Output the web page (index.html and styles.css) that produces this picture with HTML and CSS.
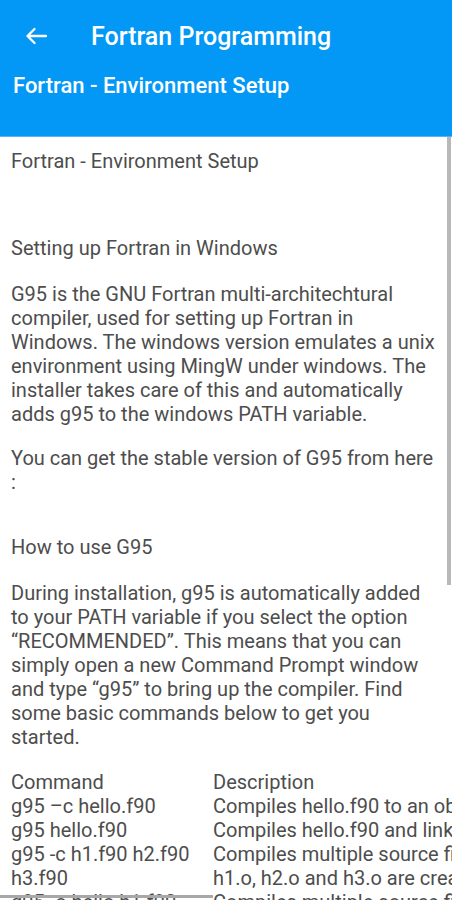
FILE: index.html
```html
<!DOCTYPE html>
<html lang="en">
<head>
  <meta charset="UTF-8">
  <meta name="viewport" content="width=device-width, initial-scale=1.0">
  <title>Fortran Programming</title>
  <link rel="stylesheet" href="styles.css">
</head>
<body>
  <header class="app-bar">
    <div class="toolbar">
      <button class="back" aria-label="Back">
        <svg width="22" height="18" viewBox="0 0 22 18">
          <path d="M21 9H2.5M9.5 2L2.5 9L9.5 16" fill="none" stroke="#fff" stroke-width="2.3" stroke-linecap="round" stroke-linejoin="round"/>
        </svg>
      </button>
      <h1 class="app-title">Fortran Programming</h1>
    </div>
    <div class="subtitle">Fortran - Environment Setup</div>
  </header>

  <main class="content">
    <div class="page-title">Fortran - Environment Setup</div>

    <h2>Setting up Fortran in Windows</h2>
    <p>G95 is the GNU Fortran multi-architechtural compiler, used for setting up Fortran in Windows. The windows version emulates a unix environment using MingW under windows. The installer takes care of this and automatically adds g95 to the windows PATH variable.</p>
    <p>You can get the stable version of G95 from here :</p>

    <h2>How to use G95</h2>
    <p>During installation, g95 is automatically added to your PATH variable if you select the option “RECOMMENDED”. This means that you can simply open a new Command Prompt window and type “g95” to bring up the compiler. Find some basic commands below to get you started.</p>

    <table class="commands">
      <colgroup><col class="cmd-col"><col class="desc-col"></colgroup>
      <tr><td>Command</td><td>Description</td></tr>
      <tr><td>g95 –c hello.f90</td><td>Compiles hello.f90 to an object file named hello.o</td></tr>
      <tr><td>g95 hello.f90</td><td>Compiles hello.f90 and links it to produce an executable a.exe</td></tr>
      <tr><td>g95 -c h1.f90 h2.f90 h3.f90</td><td>Compiles multiple source files. If all goes well, object files<br>h1.o, h2.o and h3.o are created</td></tr>
      <tr><td>g95 -o hello h1.f90 h2.f90 h3.f90</td><td>Compiles multiple source files and links them together to an executable file named 'hello'</td></tr>
    </table>
  </main>

  <div class="scroll-v"></div>
  <div class="scroll-h"></div>
</body>
</html>
```

FILE: styles.css
```css
html, body {
  overflow: hidden;
}
body {
  margin: 0;
  font-family: Roboto, "Liberation Sans", sans-serif;
  background-color: #FFFFFF;
}
.app-bar {
  background-color: #0398f6;
  color: white;
  height: 136px;
  border-bottom: 1px solid #4fb6f8;
}
.toolbar {
  display: flex;
  align-items: center;
  height: 72px;
}
.back {
  background: none;
  border: none;
  padding: 0;
  margin: 0 0 0 25px;
  width: 22px;
  height: 18px;
  display: flex;
  cursor: pointer;
}
.app-title {
  margin: 0 0 0 44px;
  font-size: 25px;
  font-weight: 500;
}
.subtitle {
  padding-left: 13px;
  font-size: 22px;
  font-weight: 500;
  line-height: 28px;
}
.content {
  padding: 12px 0 0 11px;
  color: #4d4d4d;
  font-size: 20px;
  line-height: 24px;
  width: 430px;
}
.page-title {
  margin-bottom: 63px;
}
h2 {
  font-size: 20px;
  font-weight: normal;
  margin: 41px 0 22px;
}
.page-title + h2 {
  margin-top: 0;
}
p {
  margin: 0 0 20px;
}
.commands {
  border-collapse: collapse;
  table-layout: fixed;
  width: 812px;
  margin-top: 21px;
}
.commands td {
  padding: 0;
  vertical-align: top;
}
.cmd-col {
  width: 202px;
}
.desc-col {
  width: 610px;
}
.scroll-v {
  position: absolute;
  top: 137px;
  left: 447px;
  width: 4px;
  height: 448px;
  background-color: #b8b8b8;
}
.scroll-h {
  position: absolute;
  top: 895px;
  left: 0;
  width: 213px;
  height: 3px;
  background-color: #a8a8a8;
}
```
